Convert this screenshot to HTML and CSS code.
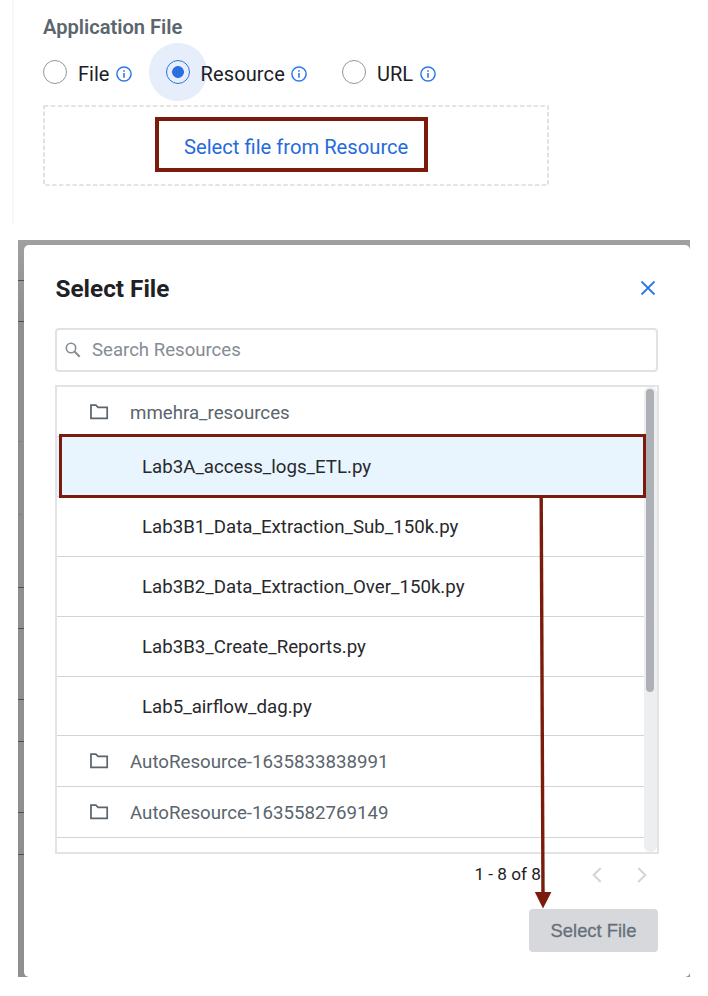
FILE: index.html
```html
<!DOCTYPE html>
<html lang="en">
<head>
<meta charset="utf-8">
<title>Select File</title>
<link rel="stylesheet" href="styles.css">
</head>
<body>
<svg class="defs" width="0" height="0" aria-hidden="true">
  <symbol id="info" viewBox="0 0 16 16"><circle cx="8" cy="8" r="7.1" fill="none" stroke="currentColor" stroke-width="1.5"/><path d="M8 7v4.8M8 4.2v1.6" fill="none" stroke="currentColor" stroke-width="1.6"/></symbol>
  <symbol id="folder" viewBox="0 0 19 16"><path d="M1 1h5l2.300 2.200h9.400v11.300H1z" fill="none" stroke="currentColor" stroke-width="1.8"/></symbol>
</svg>
<section class="source">
  <h2 class="source-title"><span>Application File</span></h2>
  <div class="options">
    <label class="option file"><i class="radio"></i><span>File</span><svg class="info"><use href="#info"/></svg></label>
    <label class="option resource"><i class="radio on"></i><span>Resource</span><svg class="info"><use href="#info"/></svg></label>
    <label class="option url"><i class="radio"></i><span>URL</span><svg class="info"><use href="#info"/></svg></label>
  </div>
  <div class="dropzone"><svg class="dashes" viewBox="0 0 506 81"><rect x="1" y="1" width="504" height="79" fill="none" stroke="#dcdcdc" stroke-width="1.7" stroke-dasharray="4.500 2.300"/></svg><a class="pick"><span>Select file from Resource</span></a></div>
</section>
<main class="backdrop">
  <div class="edge"><i></i><i></i><i class="faint"></i><i class="faint"></i><i></i><i></i><i></i><i></i><i></i><i></i></div>
  <div class="dialog">
    <header class="head">
      <h1><span>Select File</span></h1>
      <svg class="close" viewBox="0 0 16 16"><path d="M1.500 1.500l13 13M14.500 1.500l-13 13" stroke="currentColor" stroke-width="1.8"/></svg>
    </header>
    <div class="search">
      <svg class="lens" viewBox="0 0 16 16"><circle cx="6" cy="6" r="4.700" fill="none" stroke="currentColor" stroke-width="1.600"/><path d="M9.500 9.500l5.200 5.200" stroke="currentColor" stroke-width="2"/></svg>
      <span>Search Resources</span>
    </div>
    <div class="list">
      <div class="rows">
        <div class="row folder"><svg><use href="#folder"/></svg><span>mmehra_resources</span></div>
        <div class="row doc selected"><span>Lab3A_access_logs_ETL.py</span></div>
        <div class="row doc"><span>Lab3B1_Data_Extraction_Sub_150k.py</span></div>
        <div class="row doc"><span>Lab3B2_Data_Extraction_Over_150k.py</span></div>
        <div class="row doc"><span>Lab3B3_Create_Reports.py</span></div>
        <div class="row doc"><span>Lab5_airflow_dag.py</span></div>
        <div class="row folder"><svg><use href="#folder"/></svg><span>AutoResource-1635833838991</span></div>
        <div class="row folder"><svg><use href="#folder"/></svg><span>AutoResource-1635582769149</span></div>
      </div>
      <div class="track"><div class="thumb"></div></div>
    </div>
    <div class="pager">
      <span>1 - 8 of 8</span>
      <svg class="chev prev" viewBox="0 0 10 16"><path d="M8.700 1L1.700 8l7 7" fill="none" stroke="currentColor" stroke-width="2"/></svg>
      <svg class="chev" viewBox="0 0 10 16"><path d="M1.300 1l7 7-7 7" fill="none" stroke="currentColor" stroke-width="2"/></svg>
    </div>
    <div class="actions"><button class="submit"><span>Select File</span></button></div>
  </div>
  <svg class="arrow" viewBox="0 0 20 412"><path d="M8.200 0L10 397" stroke="#7a1b0c" stroke-width="3.400"/><path d="M1.800 395h16.600L10 411.500z" fill="#7a1b0c"/></svg>
</main>
</body>
</html>
```
FILE: styles.css
```css
* { box-sizing: border-box; }
body { margin: 0; width: 708px; height: 996px; background: #fff; font-family: Roboto, "Liberation Sans", sans-serif; overflow: hidden; }
h1, h2 { margin: 0; }
span { white-space: nowrap; }
svg { display: block; flex: none; }
.defs { position: absolute; }

.source { margin-left: 12px; height: 225px; border-left: 2px solid #f8f8f8; padding: 15px 0 0 29px; }
.source-title { font-size: 20.100px; line-height: 24px; font-weight: 600; color: #5a656d; }
.options { display: flex; height: 66px; align-items: center; }
.option { display: flex; align-items: center; font-size: 20px; color: #1b2025; height: 30px; }
.option span { margin-top: 3px; }
.radio { width: 24px; height: 24px; border: 1.500px solid #92979c; border-radius: 50%; flex: none; margin-right: 11px; }
.radio.on { border-color: #2a6fdf; background: radial-gradient(circle, #2a6fdf 0 5.500px, #e6eefc 6.300px); box-shadow: 0 0 0 17px #e6eefc; }
.file { width: 122.500px; }
.resource { width: 176.500px; }
.resource span { position: relative; letter-spacing: 0.13px; }
.info { width: 16px; height: 16px; color: #2f78ea; margin: 3px 0 0 6.500px; }
.dropzone { position: relative; width: 506px; height: 81px; display: flex; padding: 12px 0 0 112px; }
.dashes { position: absolute; inset: 0; width: 506px; height: 81px; }
.pick { position: relative; width: 273px; height: 55px; border: 4px solid #7a1b0c; display: flex; align-items: center; padding: 5px 0 0 25px; font-size: 20.200px; color: #256bdc; }

.backdrop { position: relative; margin: 15px 0 0 18px; width: 672px; height: 737px; padding: 5px 0 0; background: linear-gradient(#a0a0a0, #8f8f8f 80px); display: flex; overflow: hidden; }
.edge { width: 5.500px; flex: none; display: grid; grid-template-rows: 36px 41px 120px 73px 73px 41px 71px 42px 71px 42px; align-content: start; }
.edge i { align-self: end; height: 1px; background: #505050; }
.edge .faint { background: #7e7e7e; width: 3px; }
.dialog { width: 666.500px; height: 731.500px; background: #fff; border-radius: 5px; padding: 0 31.500px 0 32px; }
.head { height: 83px; display: flex; justify-content: space-between; align-items: center; padding-top: 5px; }
h1 { font-size: 24.300px; font-weight: 700; color: #202124; margin-top: -2px; }
.close { width: 16px; height: 16px; color: #2f78e4; margin: -3px 3px 0 0; }
.search { height: 44px; border: 2px solid #e0e2e3; border-radius: 4px; display: flex; align-items: center; padding-left: 8px; font-size: 18.600px; color: #858c93; margin-right: 0.500px; margin-left: -0.500px; }
.search span { margin-top: -1px; }
.lens { width: 16px; height: 16px; margin-right: 11px; }
.list { margin: 13px 0 0 -0.500px; height: 469px; border: 2px solid #e1e4e7; display: flex; }
.rows { flex: 1; }
.row { display: flex; align-items: center; border-bottom: 1.500px solid #d2d3d5; font-size: 18.700px; }
.folder { height: 50.600px; padding: 2px 0 0 33px; color: #5a656d; }
.folder svg { width: 18.500px; height: 16px; margin: -2px 21.500px 0 0; }
.doc { height: 59.900px; padding: 1px 0 0 85px; color: #27292c; }
.doc.selected { position: relative; background: #e8f5fe; }
.selected::after { content: ""; position: absolute; inset: -3px -2px -2px 2px; border: 3px solid #7a1b0c; z-index: 1; }
.rows .row:first-child { height: 50px; }
.track { width: 13px; border-radius: 6px; background: #eceef0; padding: 2px 3px 0 2px; }
.thumb { height: 303px; border-radius: 4px; background: #adb1b5; }
.pager { height: 42px; display: flex; justify-content: flex-end; align-items: center; font-size: 17.200px; color: #222; padding-right: 11.500px; }
.pager span { margin-top: -2px; }
.chev { width: 10px; height: 16px; color: #d2d5d8; margin-left: 35px; }
.prev { margin-left: 51px; }
.actions { display: flex; justify-content: flex-end; margin: 13px 0.500px 0 0; }
.submit { width: 129px; height: 43px; border: 0; border-radius: 4px; background: #d6d8dc; color: #65707a; font: 18.400px "Liberation Sans", sans-serif; padding: 1px 0 0; -webkit-text-stroke: 0.300px #65707a; }
.arrow { position: absolute; left: 515px; top: 257px; width: 20px; height: 412px; z-index: 2; }
```
